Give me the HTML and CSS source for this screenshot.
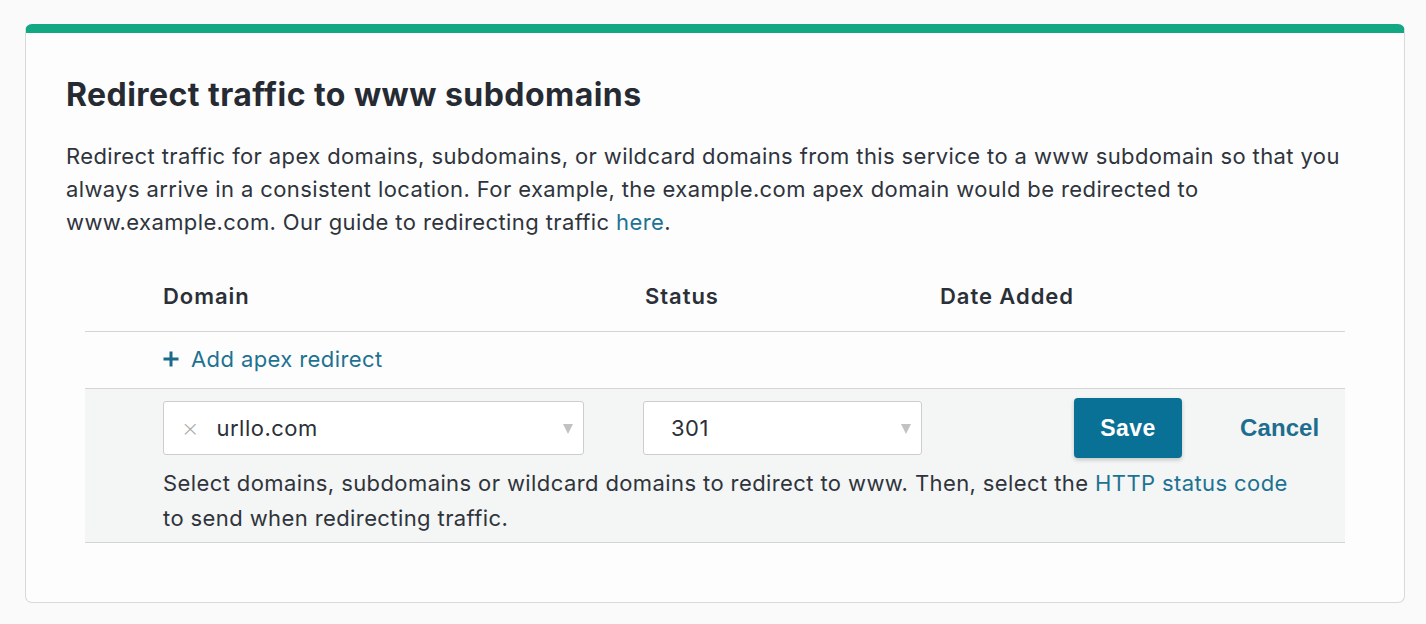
FILE: index.html
```html
<!DOCTYPE html>
<html lang="en">
<head>
<meta charset="utf-8">
<title>Redirect traffic to www subdomains</title>
<link rel="stylesheet" href="styles.css">
</head>
<body>
<section class="card">
  <h2 class="card-title">Redirect traffic to www subdomains</h2>
  <p class="card-desc">Redirect traffic for apex domains, subdomains, or wildcard domains from this service to a www subdomain so that you always arrive in a consistent location. For example, the example.com apex domain would be redirected to www.example.com. Our guide to redirecting traffic <a href="#" class="link">here</a>.</p>

  <div class="table">
    <div class="row head">
      <div class="col col-domain">Domain</div>
      <div class="col col-status">Status</div>
      <div class="col col-date">Date Added</div>
    </div>
    <div class="row add">
      <a href="#" class="add-link"><svg class="plus" viewBox="0 0 16 16" width="16" height="16"><path d="M8 0.5v15M0.5 8h15" stroke="currentColor" stroke-width="3" stroke-linecap="butt"/></svg>Add apex redirect</a>
    </div>
    <div class="row edit">
      <div class="edit-controls">
        <div class="select select-domain">
          <span class="clear">×</span>
          <span class="value">urllo.com</span>
          <span class="caret"></span>
        </div>
        <div class="select select-status">
          <span class="value">301</span>
          <span class="caret"></span>
        </div>
        <button class="btn-save" type="button">Save</button>
        <a href="#" class="btn-cancel">Cancel</a>
      </div>
      <p class="help">Select domains, subdomains or wildcard domains to redirect to www. Then, select the <a href="#" class="link">HTTP status code</a> to send when redirecting traffic.</p>
    </div>
  </div>
</section>
</body>
</html>
```

FILE: styles.css
```css
* { box-sizing: border-box; }

body {
  margin: 0;
  background: #fafafa;
  font-family: "Inter", "Liberation Sans", sans-serif;
  color: #2b3038;
  padding: 24px 21px 21px 25px;
}

.card {
  width: 1380px;
  height: 579px;
  background: #fdfdfd;
  border: 1px solid #d9d9d9;
  border-top: 9px solid #13a884;
  border-radius: 7px;
  padding: 44px 40px 0 40px;
}

.card-title {
  margin: 0;
  font-size: 32px;
  line-height: 36px;
  font-weight: 700;
  letter-spacing: 0.45px;
  color: #262b33;
}

.card-desc {
  margin: 27px 0 0 0;
  font-size: 22px;
  line-height: 33px;
  letter-spacing: 0.39px;
  color: #2f343c;
}

.link {
  color: #1d7293;
  text-decoration: none;
}

.table {
  margin: 27px 0 0 19px;
  width: 1260px;
}

.row {
  border-bottom: 1px solid #d4d4d4;
}

.head {
  display: flex;
  padding: 17px 0 22px 78px;
  font-size: 22px;
  line-height: 26px;
  font-weight: 600;
  letter-spacing: 0.95px;
  color: #2b3038;
}

.col-domain { width: 482px; }
.col-status { width: 295px; }

.add {
  padding: 14px 0 14px 78px;
  line-height: 26px;
}

.add-link {
  display: inline-flex;
  align-items: center;
  gap: 12px;
  font-size: 22px;
  letter-spacing: 0.4px;
  color: #1d7293;
  text-decoration: none;
}

.plus { color: #1a6a8a; }

.edit {
  background: #f4f5f5;
  padding: 9px 0 6px 78px;
}

.edit-controls {
  display: flex;
  align-items: center;
}

.select {
  position: relative;
  display: flex;
  align-items: center;
  height: 54px;
  background: #fff;
  border: 1px solid #cdcdcd;
  border-radius: 3px;
  font-size: 22px;
  color: #2b3038;
}

.select-domain {
  width: 421px;
  padding-left: 17px;
  margin-right: 59px;
}

.select-status {
  width: 279px;
  padding-left: 27px;
}

.clear {
  color: #a8a8a8;
  font-size: 22px;
  margin-right: 17px;
  font-family: "DejaVu Sans", sans-serif;
  font-weight: 300;
}

.value {
  letter-spacing: 0.5px;
}

.caret {
  position: absolute;
  right: 10px;
  top: 22px;
  width: 0;
  height: 0;
  border-left: 5px solid transparent;
  border-right: 5px solid transparent;
  border-top: 10px solid #c2c2c2;
}

.btn-save {
  margin-left: 152px;
  width: 108px;
  height: 60px;
  background: #0a7196;
  border: none;
  border-radius: 4px;
  box-shadow: 0 2px 4px rgba(0, 0, 0, 0.2);
  color: #fff;
  font-family: "Liberation Sans", sans-serif;
  font-size: 23px;
  font-weight: 700;
  letter-spacing: 0.4px;
}

.btn-cancel {
  margin-left: 58px;
  font-family: "Liberation Sans", sans-serif;
  font-size: 24px;
  font-weight: 700;
  letter-spacing: 0.1px;
  color: #1d6e8e;
  text-decoration: none;
}

.help {
  margin: 8px 0 0 0;
  max-width: 1140px;
  font-size: 22px;
  line-height: 35px;
  letter-spacing: 0.4px;
  color: #2f343c;
}
```
